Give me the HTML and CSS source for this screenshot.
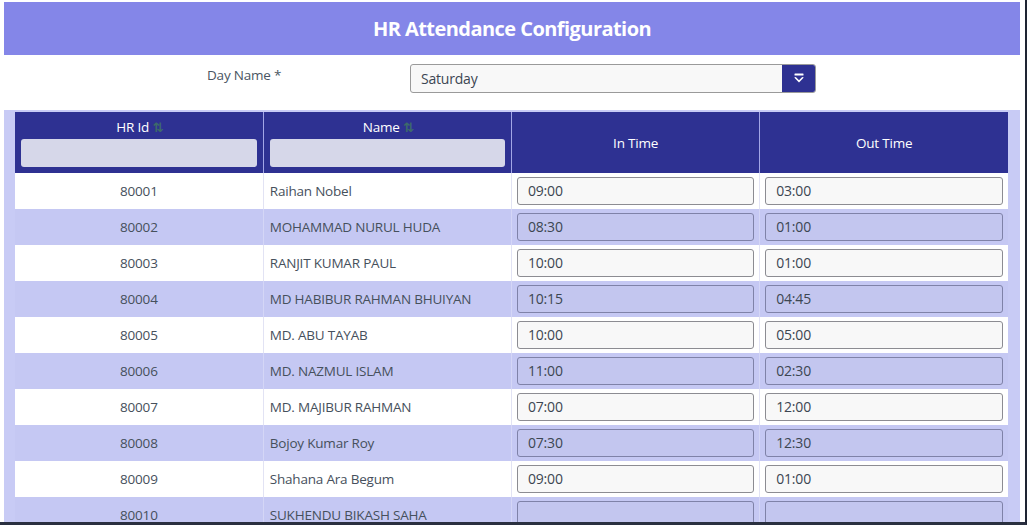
FILE: index.html
```html
<!DOCTYPE html>
<html>
<head>
<meta charset="utf-8">
<link rel="stylesheet" href="styles.css">
</head>
<body>
<div class="page">
  <div class="title-bar">HR Attendance Configuration</div>
  <div class="form-row">
    <label class="form-label">Day Name *</label>
    <div class="select">
      <span class="select-value">Saturday</span>
      <span class="select-btn">
        <svg width="14" height="14" viewBox="0 0 14 14"><rect x="2.5" y="1.5" width="9" height="2" rx="0.5" fill="#fff"/><path d="M2.2 5.6 L7 10.6 L11.8 5.6 L10.2 5 L7 8.2 L3.8 5 Z" fill="#fff"/></svg>
      </span>
    </div>
  </div>
  <div class="table-wrap">
    <table class="grid">
      <thead>
        <tr>
          <th><div class="th-title">HR Id <span class="sort">&#8645;</span></div><div class="filter"></div></th>
          <th><div class="th-title">Name <span class="sort">&#8645;</span></div><div class="filter"></div></th>
          <th>In Time</th>
          <th>Out Time</th>
        </tr>
      </thead>
      <tbody>
        <tr><td class="id">80001</td><td class="name">Raihan Nobel</td><td><div class="tin">09:00</div></td><td><div class="tin">03:00</div></td></tr>
        <tr class="alt"><td class="id">80002</td><td class="name">MOHAMMAD NURUL HUDA</td><td><div class="tin">08:30</div></td><td><div class="tin">01:00</div></td></tr>
        <tr><td class="id">80003</td><td class="name">RANJIT KUMAR PAUL</td><td><div class="tin">10:00</div></td><td><div class="tin">01:00</div></td></tr>
        <tr class="alt"><td class="id">80004</td><td class="name">MD HABIBUR RAHMAN BHUIYAN</td><td><div class="tin">10:15</div></td><td><div class="tin">04:45</div></td></tr>
        <tr><td class="id">80005</td><td class="name">MD. ABU TAYAB</td><td><div class="tin">10:00</div></td><td><div class="tin">05:00</div></td></tr>
        <tr class="alt"><td class="id">80006</td><td class="name">MD. NAZMUL ISLAM</td><td><div class="tin">11:00</div></td><td><div class="tin">02:30</div></td></tr>
        <tr><td class="id">80007</td><td class="name">MD. MAJIBUR RAHMAN</td><td><div class="tin">07:00</div></td><td><div class="tin">12:00</div></td></tr>
        <tr class="alt"><td class="id">80008</td><td class="name">Bojoy Kumar Roy</td><td><div class="tin">07:30</div></td><td><div class="tin">12:30</div></td></tr>
        <tr><td class="id">80009</td><td class="name">Shahana Ara Begum</td><td><div class="tin">09:00</div></td><td><div class="tin">01:00</div></td></tr>
        <tr class="alt"><td class="id">80010</td><td class="name">SUKHENDU BIKASH SAHA</td><td><div class="tin"></div></td><td><div class="tin"></div></td></tr>
      </tbody>
    </table>
  </div>
</div>
<div class="frame"></div>
</body>
</html>
```

FILE: styles.css
```css
html, body {
  margin: 0;
  padding: 0;
  background: #fff;
  overflow: hidden;
  height: 525px;
}
body {
  font-family: "Open Sans", "DejaVu Sans", sans-serif;
  color: #46505c;
}
.page {
  padding: 2px 7px 0 4px;
  height: 523px;
  overflow: hidden;
}
.title-bar {
  height: 53px;
  background: #8486e8;
  color: #fff;
  font-weight: 700;
  font-size: 20px;
  letter-spacing: -0.55px;
  display: flex;
  align-items: center;
  justify-content: center;
}
.form-row {
  display: flex;
  align-items: flex-start;
  padding-top: 9px;
  height: 46px;
}
.form-label {
  font-size: 13.5px;
  color: #4a5663;
  width: 203px;
  padding-left: 203px;
  padding-top: 2px;
  letter-spacing: -0.2px;
}
.select {
  width: 404px;
  height: 27px;
  border: 1px solid #9a9a9a;
  border-radius: 3px;
  background: #f8f8f8;
  display: flex;
  align-items: center;
  overflow: hidden;
}
.select-value {
  flex: 1;
  padding-left: 10px;
  font-size: 14px;
  color: #3c4652;
  letter-spacing: -0.2px;
}
.select-btn {
  width: 33px;
  height: 100%;
  background: #2e3192;
  display: flex;
  align-items: center;
  justify-content: center;
}
.table-wrap {
  background: #c8cbf5;
  padding: 2px 11px 0 11px;
  height: 411px;
  overflow: hidden;
}
.grid {
  width: 993px;
  border-collapse: collapse;
  table-layout: fixed;
}
.grid th {
  background: #2e3192;
  color: #fff;
  font-weight: 400;
  font-size: 13.5px;
  height: 61px;
  padding: 0 6px;
  border-left: 1px solid #a3a6e6;
  letter-spacing: -0.2px;
  vertical-align: middle;
}
.grid th:first-child { border-left: none; }
.th-title {
  height: 23px;
  line-height: 22px;
  padding-top: 3px;
}
.sort {
  color: #3d6a6a;
  font-size: 13px;
  letter-spacing: -2px;
  font-weight: 700;
}
.filter {
  height: 28px;
  background: #d6d7e9;
  border-radius: 3px;
  margin-bottom: 6px;
}
.grid td {
  height: 36px;
  padding: 0 5px;
  font-size: 13.5px;
  color: #46505c;
  background: #fff;
  border-left: 1px solid #e2e3f4;
  letter-spacing: -0.2px;
}
.grid td:first-child { border-left: none; }
.grid tr.alt td { background: #c5c8f3; border-left-color: #d4d6f6; }
.grid td.id { text-align: center; }
.grid td.name { padding-left: 6px; }
.tin {
  height: 26px;
  border: 1px solid #8c8c92;
  border-radius: 3px;
  background: #f8f8f8;
  font-size: 14px;
  line-height: 26px;
  padding-left: 10px;
  color: #3c4652;
}
.grid tr.alt .tin {
  background: #c3c6ef;
  border-color: #7f82a8;
}
.frame {
  position: fixed;
  left: 0;
  top: 0;
  width: 1025px;
  height: 522px;
  border-right: 2px solid #1e2433;
  border-bottom: 3px solid #2a3040;
  pointer-events: none;
}
```
